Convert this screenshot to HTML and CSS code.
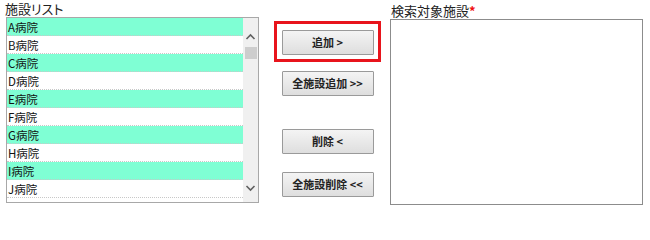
FILE: index.html
```html
<!DOCTYPE html>
<html lang="ja">
<head>
<meta charset="utf-8">
<link rel="stylesheet" href="styles.css">
</head>
<body>
<div class="page">
  <div class="col-left">
    <div class="label">施設リスト</div>
    <div class="listbox">
      <ul class="rows">
        <li class="row alt">A病院</li>
        <li class="row">B病院</li>
        <li class="row alt">C病院</li>
        <li class="row">D病院</li>
        <li class="row alt">E病院</li>
        <li class="row">F病院</li>
        <li class="row alt">G病院</li>
        <li class="row">H病院</li>
        <li class="row alt">I病院</li>
        <li class="row">J病院</li>
      </ul>
      <div class="scrollbar">
        <svg class="arrow" width="15" height="10" viewBox="0 0 15 10"><path d="M3.5 7 L7.5 3 L11.5 7" fill="none" stroke="#606060" stroke-width="1.6"/></svg>
        <div class="thumb"></div>
        <div class="track"></div>
        <svg class="arrow" width="15" height="10" viewBox="0 0 15 10"><path d="M3.5 3 L7.5 7 L11.5 3" fill="none" stroke="#606060" stroke-width="1.6"/></svg>
      </div>
    </div>
  </div>
  <div class="col-mid">
    <div class="focus"><button class="btn">追加 &gt;</button></div>
    <button class="btn b2">全施設追加 &gt;&gt;</button>
    <button class="btn b3">削除 &lt;</button>
    <button class="btn b4">全施設削除 &lt;&lt;</button>
  </div>
  <div class="col-right">
    <div class="label label-r">検索対象施設<span class="req">*</span></div>
    <div class="target"></div>
  </div>
</div>
</body>
</html>
```
FILE: styles.css
```css
html, body {
  margin: 0;
  padding: 0;
  background: #ffffff;
}
body {
  font-family: "Noto Sans CJK JP", "Noto Sans", sans-serif;
  color: #222;
}
.page {
  display: flex;
  padding-left: 6px;
}
.col-left {
  width: 253px;
  display: flex;
  flex-direction: column;
}
.label {
  font-size: 13px;
  line-height: 17px;
  height: 17px;
  margin-left: -1px;
  color: #222;
  font-feature-settings: "palt";
  white-space: nowrap;
}
.listbox {
  border: 1px solid #a8a8a8;
  height: 184px;
  display: flex;
  overflow: hidden;
}
.rows {
  list-style: none;
  margin: 0;
  padding: 0;
  flex: 1;
}
.row {
  height: 16px;
  padding-top: 1px;
  line-height: 17px;
  font-size: 11.5px;
  padding-left: 1px;
  border-bottom: 1px dotted #c8c8c8;
  background: #ffffff;
  color: #111;
}
.row.alt {
  background: #7fffd4;
}
.scrollbar {
  width: 15px;
  background: #f0f0f0;
  display: flex;
  flex-direction: column;
  align-items: center;
}
.arrow {
  display: block;
  margin-top: 14px;
}
.thumb {
  width: 12px;
  height: 12px;
  background: #cdcdcd;
  margin-top: 5px;
}
.track {
  flex: 1;
}
.scrollbar .arrow:last-child {
  margin-top: 0;
  margin-bottom: 9px;
}
.col-mid {
  width: 107px;
  margin-left: 15px;
  display: flex;
  flex-direction: column;
  align-items: center;
}
.focus {
  margin-top: 21px;
  width: 101px;
  border: 3px solid #e8141c;
  display: flex;
  justify-content: center;
  padding-top: 6px;
  box-sizing: content-box;
  height: 29px;
}
.btn {
  width: 92px;
  height: 25px;
  border: 1px solid #9a9a9a;
  border-radius: 1px;
  background: linear-gradient(#f4f4f4, #dedede);
  font-family: "Noto Sans CJK JP", "Noto Sans", sans-serif;
  font-size: 11px;
  font-weight: bold;
  color: #222;
  padding: 0;
  line-height: 23px;
}
.b2 { margin-top: 9px; }
.b3 { margin-top: 33px; }
.b4 { margin-top: 18px; }
.col-right {
  width: 253px;
  margin-left: 9px;
  display: flex;
  flex-direction: column;
}
.label-r {
  height: 19px;
  line-height: 21px;
  margin-left: 1px;
  font-feature-settings: normal;
}
.req {
  color: #f01010;
  font-weight: bold;
}
.target {
  border: 1px solid #8c8c8c;
  height: 184px;
}
```
